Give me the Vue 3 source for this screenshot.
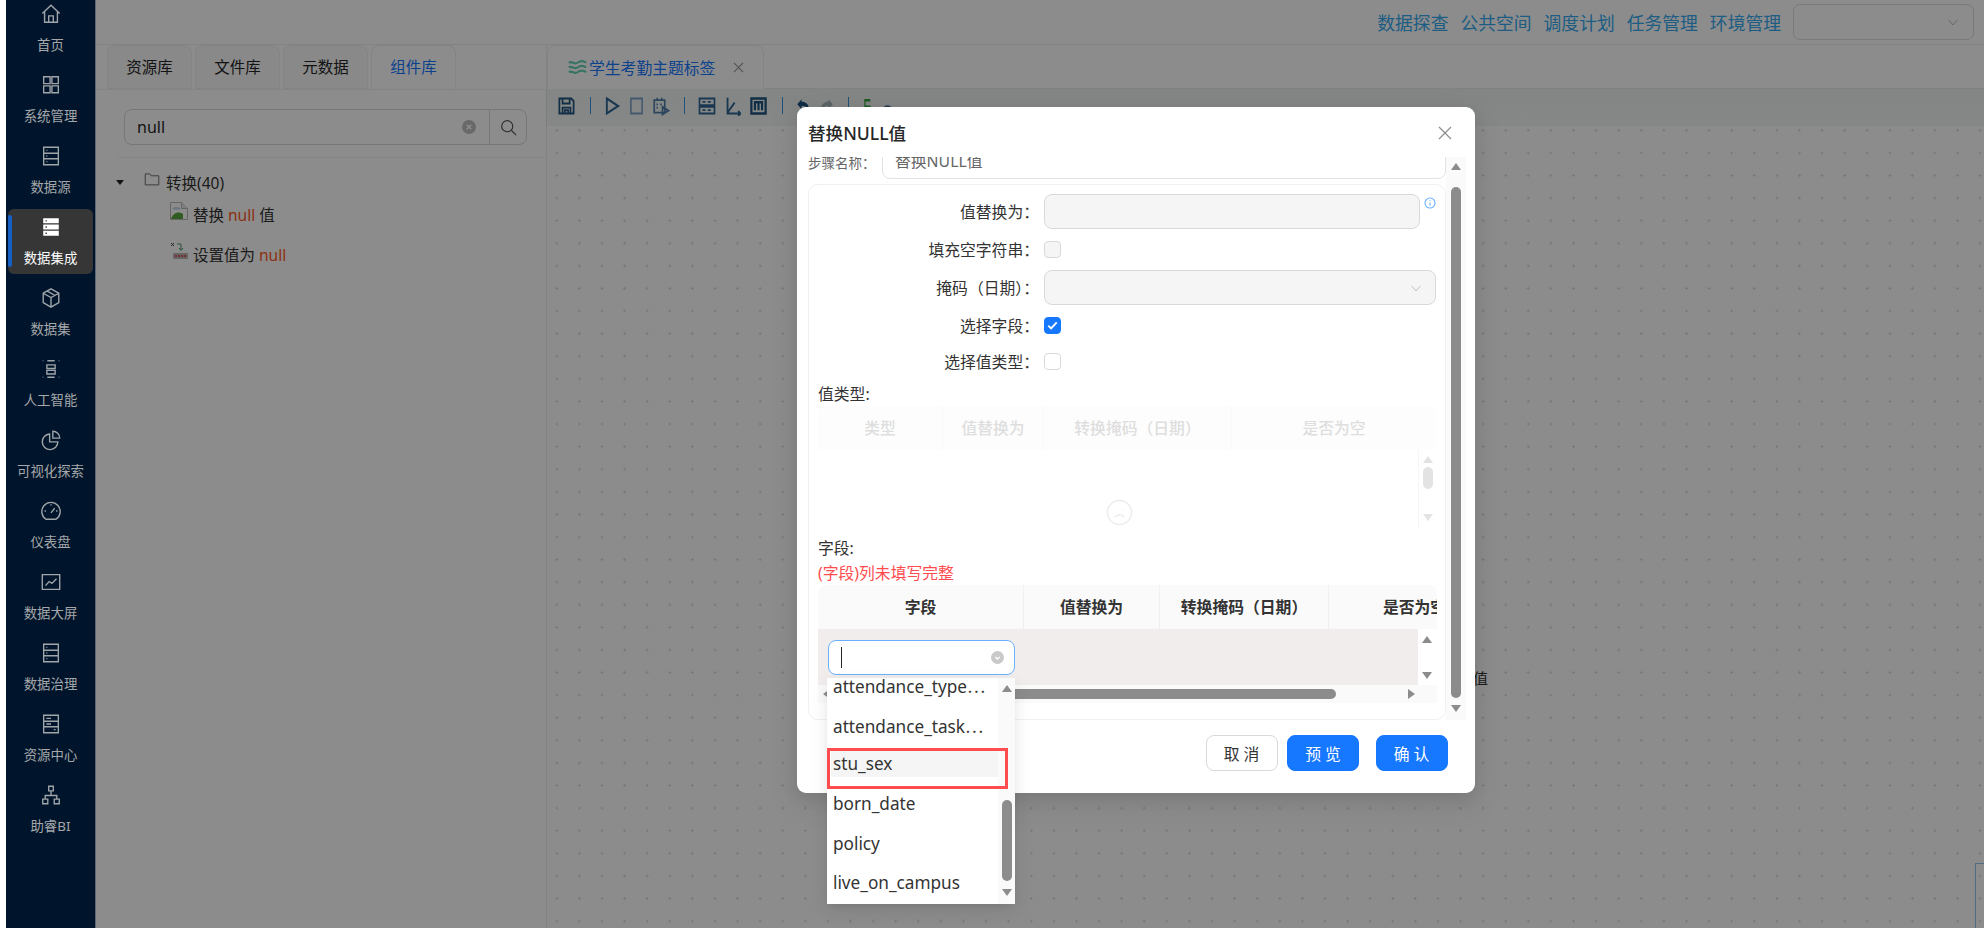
<script setup>
const server = 'M4 2.5h16v19H4z M4 9h16 M4 15h16 M7 5.8h1 M7 12h1 M7 18.2h1'

const menu = [
  { label: '首页', d: 'M2.5 11.5L12 2.5l9.5 9 M5 9.5V21h14V9.5 M9.5 21v-7h5v7' },
  { label: '系统管理', d: 'M4 3h7v7.5H4z M13 3h7v7.5h-7z M4 13h7v7.5H4z M13 13h7v7.5h-7z' },
  { label: '数据源', d: server },
  {
    label: '数据集成',
    active: true,
    d: 'M3.5 2.5h17V8h-17z M6 4.5v1.5h1.5V4.5z M3.5 9.3h17v5.4h-17z M6 11.2v1.5h1.5v-1.5z M3.5 16h17v5.5h-17z M6 18v1.5h1.5V18z',
  },
  { label: '数据集', d: 'M12 2L20.5 6.8V17L12 22L3.5 17V6.8z M3.5 6.8L12 11.5L20.5 6.8 M12 11.5V22 M8 4.5L16 9' },
  { label: '人工智能', d: 'M3 3h.6 M20.4 3h.6 M3 21h.6 M20.4 21h.6 M8 3h8 M8 21h8 M7.5 7.5h9v4h-9z M7.5 13.5h9v4h-9z' },
  { label: '可视化探索', d: 'M10.5 5.5A8.5 8.5 0 1 0 19.5 14H10.5z M14 2.5A7.5 7.5 0 0 1 21.5 10H14z' },
  { label: '仪表盘', d: 'M6.5 21A10 10 0 1 1 17.5 21z M12 14L16 9 M12 4.5v1.5 M5 12h1.5 M17.5 12H19' },
  { label: '数据大屏', d: 'M2.5 4h19v16h-19z M6 16l4-4.5 3 2 5-5' },
  { label: '数据治理', d: server },
  { label: '资源中心', d: 'M4 2.5h16v19H4z M4 9h16 M4 15h16 M7 5.8h5 M7 12h5 M15 18.2h2' },
  { label: '助睿BI', d: 'M9.5 2.5h5v5h-5z M3 16.5h5.5v5H3z M15.5 16.5H21v5h-5.5z M12 7.5v5 M5.7 16.5v-4h12.6v4' },
]

const links = ['数据探查', '公共空间', '调度计划', '任务管理', '环境管理']
const libTabs = ['资源库', '文件库', '元数据', '组件库']

const tools = [
  { w: 19, c: '#1f5480', d: 'M3 3h15l3 3v15H3z M7 3v6h9V3 M7 21v-7h10v7 M10 17h4v4h-4z' },
  { sep: true },
  { w: 17, c: '#2f6593', sw: 2.6, d: 'M4 3l16 9-16 9z' },
  { w: 15, c: '#7ba3c6', sw: 2.6, d: 'M3 3h18v18H3z' },
  { w: 18, c: '#4d7fa8', d: 'M3 5h14v15H3z M7 2v4 M13 2v4 M14 13l8 4.5-8 4.5z M6 10h2 M11 10h2 M6 14h2' },
  { sep: true },
  { w: 18, c: '#2f6593', d: 'M2 3h20v8H2z M2 13h20v8H2z M6 7h4 M13 7h4 M6 17h4 M13 17h4' },
  { w: 17, c: '#2f6593', sw: 2.6, d: 'M5 2v19h18 M5 20L15 8 M20 18l3 3-3 3' },
  { w: 19, c: '#1f5480', sw: 2.8, d: 'M3 3h18v18H3z M7.5 17V7.5h9V17 M12 7.5V17' },
  { sep: true },
  { w: 15, c: '#1f5480', fill: true, d: 'M9 4L2 10l7 6v-4c6 0 9 1 12 6 0-8-5-11-12-11z' },
  { w: 15, c: '#a8b4bd', fill: true, d: 'M15 4l7 6-7 6v-4c-6 0-9 1-12 6 0-8 5-11 12-11z' },
  { sep: true },
  { w: 10, c: '#39a63c', sw: 3, d: 'M20 5H7v8h12v9H4' },
  { w: 15, c: '#4a6d8c', sw: 2, d: 'M3 21a9 9 0 0 1 18 0z' },
]

const options = [
  { label: 'attendance_type⋯' },
  { label: 'attendance_task⋯' },
  { label: 'stu_sex', picked: true },
  { label: 'born_date' },
  { label: 'policy' },
  { label: 'live_on_campus' },
]
</script>

<template>
  <div class="page">
    <aside class="sidebar">
      <div v-for="item in menu" :key="item.label" class="menu-item" :class="{ active: item.active }">
        <svg class="menu-icon" viewBox="0 0 24 24"><path :d="item.d" /></svg>
        <span>{{ item.label }}</span>
      </div>
    </aside>

    <div class="main">
      <header class="topbar">
        <a v-for="link in links" :key="link" class="top-link">{{ link }}</a>
        <div class="top-select">
          <svg class="chevron" viewBox="0 0 16 16"><path d="M2 5l6 7 6-7" /></svg>
        </div>
      </header>

      <div class="workspace">
        <section class="lib">
          <div class="lib-tabs">
            <div v-for="tab in libTabs" :key="tab" class="lib-tab" :class="{ on: tab === '组件库' }">{{ tab }}</div>
          </div>
          <div class="search">
            <span class="search-text">null</span>
            <span class="clear"><svg viewBox="0 0 12 12"><path d="M4 4l4 4M8 4l-4 4" /></svg></span>
            <span class="search-btn">
              <svg viewBox="0 0 20 20"><circle cx="8.5" cy="8.5" r="6.5" /><path d="M13.5 13.5L19 19" /></svg>
            </span>
          </div>
          <div class="lib-line"></div>
          <div class="tree-root">
            <i class="caret"></i>
            <svg class="folder" viewBox="0 0 16 14"><path d="M.7 12.8V1h5l1.4 2h8.2v9.8z" /></svg>
            <span>转换(40)</span>
          </div>
          <div class="tree-leaf first">
            <svg class="leaf-icon" viewBox="0 0 18 18">
              <path d="M.5.5h11l6 6v11H.5z" fill="#fff" stroke="#b8b8b8" />
              <path d="M11.5.5v6h6" fill="#e8e8e8" stroke="#b8b8b8" />
              <path d="M1 17c2-6 7-8 12-5v5z" fill="#5aa83c" />
              <path d="M2 7c3-3 6-3 9 0-3 1-6 1-9 0z" fill="#c3d7ee" />
            </svg>
            <span>替换 <em>null</em> 值</span>
          </div>
          <div class="tree-leaf second">
            <svg class="leaf-icon" viewBox="0 0 18 18">
              <path d="M1 1l3 3M4 1L1 4" fill="none" stroke="#444" stroke-width="1" />
              <path d="M7 2h4v6M9 6l2 2.5L13 6" fill="none" stroke="#4c9a6a" stroke-width="1" />
              <rect x="3" y="11" width="15" height="6" rx="1" fill="#b9b9b9" />
              <path d="M5 14h11" stroke="#d9534f" stroke-width="2" stroke-dasharray="2 1" />
            </svg>
            <span>设置值为 <em>null</em></span>
          </div>
        </section>

        <section class="editor">
          <div class="editor-tabs">
            <div class="editor-tab">
              <svg class="wave" viewBox="0 0 24 20">
                <path d="M1 4c4-3 7 3 11 0s7-3 11 0 M1 10c4-3 7 3 11 0s7-3 11 0 M1 16c4-3 7 3 11 0s7-3 11 0" />
              </svg>
              <span>学生考勤主题标签</span>
              <svg class="tab-close" viewBox="0 0 12 12"><path d="M1 1l10 10M11 1L1 11" /></svg>
            </div>
          </div>
          <div class="toolbar">
            <template v-for="(tool, i) in tools" :key="i">
              <span v-if="tool.sep" class="tool-sep"></span>
              <svg v-else class="tool" :width="tool.w" height="20" viewBox="0 0 24 24" preserveAspectRatio="none">
                <path
                  :d="tool.d"
                  :fill="tool.fill ? tool.c : 'none'"
                  :stroke="tool.fill ? 'none' : tool.c"
                  :stroke-width="tool.sw || 2.2"
                />
              </svg>
            </template>
          </div>
          <div class="canvas">
            <span class="node-label">替换NULL值</span>
            <div class="node-box"></div>
          </div>
        </section>
      </div>

      <div class="mask"></div>

      <div class="dialog">
        <div class="dialog-head">
          <span>替换NULL值</span>
          <svg class="dialog-close" viewBox="0 0 14 14"><path d="M1 1l12 12M13 1L1 13" /></svg>
        </div>

        <div class="dialog-body">
          <div class="form">
            <div class="step-row">
              <span class="step-label">步骤名称：</span>
              <div class="step-input">替换NULL值</div>
            </div>

            <div class="card">
              <div class="row">
                <label>值替换为：</label>
                <div class="input disabled short"></div>
                <svg class="info" viewBox="0 0 12 12">
                  <circle cx="6" cy="6" r="5" />
                  <path d="M6 3.2v.8M6 5.4v3.4" />
                </svg>
              </div>
              <div class="row">
                <label>填充空字符串：</label>
                <span class="check disabled"></span>
              </div>
              <div class="row third">
                <label>掩码（日期）：</label>
                <div class="input disabled">
                  <svg class="chevron" viewBox="0 0 16 16"><path d="M2 5l6 7 6-7" /></svg>
                </div>
              </div>
              <div class="row">
                <label>选择字段：</label>
                <span class="check on">
                  <svg viewBox="0 0 16 16"><path d="M3.5 8.2l3 3 6-6.5" /></svg>
                </span>
              </div>
              <div class="row fifth">
                <label>选择值类型：</label>
                <span class="check"></span>
              </div>

              <div class="sub-title">值类型:</div>
              <div class="table-a">
                <div class="head head-a">
                  <div>类型</div>
                  <div>值替换为</div>
                  <div>转换掩码（日期）</div>
                  <div>是否为空</div>
                </div>
                <div class="body-a">
                  <svg class="sad" viewBox="0 0 28 28">
                    <circle cx="14" cy="14" r="12.5" />
                    <path d="M9 19c3-3.5 7-3.5 10 0 M10 11h.5 M17.5 11h.5" />
                  </svg>
                  <div class="bar bar-a">
                    <i class="up"></i>
                    <b class="thumb-a"></b>
                    <i class="down"></i>
                  </div>
                </div>
              </div>

              <div class="sub-title fields">字段:</div>
              <div class="error">(字段)列未填写完整</div>
              <div class="table-b">
                <div class="head head-b">
                  <div>字段</div>
                  <div>值替换为</div>
                  <div>转换掩码（日期）</div>
                  <div>是否为空</div>
                </div>
                <div class="body-b">
                  <div class="cell-row">
                    <div class="combo">
                      <span class="cursor"></span>
                      <span class="clear small"><svg viewBox="0 0 12 12"><path d="M4 5l2 2 2-2" /></svg></span>
                    </div>
                  </div>
                  <div class="bar bar-b">
                    <i class="up"></i>
                    <i class="down"></i>
                  </div>
                </div>
                <div class="hbar">
                  <i class="left"></i>
                  <b class="hthumb"></b>
                  <i class="right"></i>
                </div>
              </div>
            </div>
          </div>

          <div class="bar bar-main">
            <i class="up"></i>
            <b class="thumb-main"></b>
            <i class="down"></i>
          </div>
        </div>

        <div class="dialog-foot">
          <button class="btn">取 消</button>
          <button class="btn primary">预 览</button>
          <button class="btn primary last">确 认</button>
        </div>

        <div class="dropdown">
          <div class="option-list">
            <div v-for="opt in options" :key="opt.label" class="option" :class="{ picked: opt.picked }">
              <span>{{ opt.label }}</span>
            </div>
          </div>
          <div class="bar bar-drop">
            <i class="up"></i>
            <b class="thumb-drop"></b>
            <i class="down"></i>
          </div>
          <div class="mark"></div>
        </div>
      </div>
    </div>
  </div>
</template>

<style>
html,
body {
  margin: 0;
  background: #fff;
  overflow: hidden;
}
</style>

<style scoped>
.page {
  display: flex;
  width: 1984px;
  height: 928px;
  padding-left: 6px;
  box-sizing: border-box;
  overflow: hidden;
  font-family: "Noto Sans", "Noto Sans CJK SC", sans-serif;
  color: #262626;
}

/* sidebar */
.sidebar {
  width: 90px;
  flex: none;
  background: #00152b;
  border-right: 1px solid #5a6675;
  box-sizing: border-box;
  padding: 0 2px;
  display: flex;
  flex-direction: column;
  gap: 6px;
  margin-top: 0;
  position: relative;
  z-index: 3;
}
.menu-item {
  height: 65px;
  flex: none;
  border-radius: 6px;
  display: flex;
  flex-direction: column;
  align-items: center;
  color: #a5a7aa;
  font-size: 13.4px;
  line-height: 20px;
  position: relative;
}
.menu-item:first-child {
  margin-top: -4px;
}
.menu-item.active {
  background: #363636;
  color: #fff;
}
.menu-item.active::before {
  content: "";
  position: absolute;
  left: 0;
  top: 6px;
  bottom: 7px;
  width: 4px;
  background: #1660c4;
  border-radius: 2px;
}
.menu-icon {
  width: 22px;
  height: 22px;
  margin-top: 7px;
  margin-bottom: 10px;
  fill: none;
  stroke: #a0a5aa;
  stroke-width: 1.5;
}
.active .menu-icon {
  fill: #fff;
  stroke: none;
  fill-rule: evenodd;
}

/* main area */
.main {
  flex: 1;
  min-width: 0;
  position: relative;
  display: flex;
  flex-direction: column;
}
.topbar {
  height: 44px;
  flex: none;
  border-bottom: 1px solid #eee;
  display: flex;
  align-items: center;
  justify-content: flex-end;
  gap: 12px;
  padding-right: 10px;
  font-size: 17.8px;
}
.top-link {
  color: #36aaf0;
}
.top-select {
  width: 181px;
  height: 36px;
  box-sizing: border-box;
  border: 1.5px solid #dcdcdc;
  border-radius: 7px;
  display: flex;
  align-items: center;
  justify-content: flex-end;
  padding-right: 14px;
}
.chevron {
  width: 12px;
  height: 12px;
  fill: none;
  stroke: #bdbdbd;
  stroke-width: 1.3;
}

.workspace {
  flex: 1;
  min-height: 0;
  display: flex;
}
.lib {
  width: 451px;
  flex: none;
  border-right: 1px solid #eee;
  box-sizing: border-box;
  font-size: 15.5px;
}
.lib-tabs {
  display: flex;
  gap: 3px;
  height: 44px;
  padding-left: 11px;
  border-bottom: 1px solid #f0f0f0;
}
.lib-tab {
  width: 85px;
  height: 44px;
  box-sizing: border-box;
  border: 1px solid #f0f0f0;
  border-radius: 8px 8px 0 0;
  background: #fafafa;
  text-align: center;
  line-height: 42px;
}
.lib-tab.on {
  background: #fff;
  border-bottom-color: #fff;
  color: #1677ff;
}
.search {
  margin: 19px 0 0 28px;
  width: 403px;
  height: 36px;
  box-sizing: border-box;
  border: 1px solid #d9d9d9;
  border-radius: 8px;
  display: flex;
  align-items: center;
  position: relative;
  padding-left: 12px;
}
.search-text {
  flex: 1;
  font-size: 16px;
}
.clear {
  width: 14px;
  height: 14px;
  border-radius: 50%;
  background: #bfbfbf;
  display: flex;
  margin-right: 13px;
}
.clear svg {
  width: 14px;
  height: 14px;
  fill: none;
  stroke: #fff;
  stroke-width: 1.2;
}
.search-btn {
  width: 36px;
  height: 100%;
  border-left: 1px solid #d9d9d9;
  display: flex;
  align-items: center;
  justify-content: center;
}
.search-btn svg {
  width: 17px;
  height: 17px;
  fill: none;
  stroke: #555;
  stroke-width: 1.4;
}
.lib-line {
  height: 1px;
  margin: 12px 0 0 22px;
  background: #f0f0f0;
}
.tree-root {
  height: 24px;
  margin-top: 12px;
  padding-left: 20px;
  display: flex;
  align-items: center;
  color: #333;
}
.caret {
  width: 0;
  height: 0;
  border-left: 4px solid transparent;
  border-right: 4px solid transparent;
  border-top: 5px solid #222;
  margin-right: 20px;
}
.folder {
  width: 16px;
  height: 13px;
  margin: -6px 6px 0 0;
  fill: none;
  stroke: #666;
  stroke-width: 1;
}
.tree-leaf {
  height: 24px;
  padding-left: 74px;
  display: flex;
  align-items: center;
  gap: 5px;
  color: #333;
}
.tree-leaf.first {
  margin-top: 8px;
}
.tree-leaf.second {
  margin-top: 16px;
}
.tree-leaf em {
  font-style: normal;
  color: #ff5a1f;
}
.leaf-icon {
  width: 18px;
  height: 18px;
  flex: none;
  margin-top: -6px;
}

.editor {
  flex: 1;
  min-width: 0;
  display: flex;
  flex-direction: column;
}
.editor-tabs {
  height: 43px;
  flex: none;
  border-bottom: 1px solid #eee;
}
.editor-tab {
  width: 217px;
  height: 44px;
  box-sizing: border-box;
  border: 1px solid #f0f0f0;
  border-bottom: 0;
  border-radius: 8px 8px 0 0;
  background: #fff;
  display: flex;
  align-items: center;
  padding-left: 20px;
  color: #1677ff;
  font-size: 15.8px;
}
.wave {
  width: 19px;
  height: 17px;
  margin-right: 2px;
  fill: none;
  stroke: #63d2b4;
  stroke-width: 2.6;
}
.tab-close {
  width: 11px;
  height: 11px;
  margin-left: 18px;
  fill: none;
  stroke: #999;
  stroke-width: 1.3;
}
.toolbar {
  height: 37px;
  flex: none;
  background: linear-gradient(#eef5f2, #f3f7f5);
  box-shadow: 0 1px 2px rgba(0, 0, 0, 0.12);
  display: flex;
  align-items: center;
  gap: 8px;
  padding: 0 0 4px 10px;
  box-sizing: border-box;
}
.tool {
  flex: none;
}
.tool-sep {
  width: 1px;
  height: 17px;
  background: #3b94e0;
  margin: 0 5.5px;
}
.canvas {
  flex: 1;
  min-height: 0;
  position: relative;
  overflow: hidden;
  background-color: #fff;
  background-image: radial-gradient(circle, #dcdcdc 1px, transparent 1.2px);
  background-size: 22.6px 22.6px;
  background-position: -1.5px -7px;
}
.node-label {
  position: absolute;
  right: 496px;
  top: 541px;
  font-size: 15px;
  line-height: 22px;
  color: #333;
}
.node-box {
  position: absolute;
  left: 1428px;
  top: 737px;
  width: 120px;
  height: 120px;
  border: 1px solid #94c4f5;
}

.mask {
  position: absolute;
  inset: 0;
  background: rgba(0, 0, 0, 0.45);
  z-index: 1;
}

/* dialog */
.dialog {
  position: absolute;
  left: 701px;
  top: 107px;
  width: 677.5px;
  height: 686px;
  background: #fff;
  border-radius: 9px;
  box-shadow: 0 6px 16px rgba(0, 0, 0, 0.08), 0 9px 28px 8px rgba(0, 0, 0, 0.05);
  z-index: 2;
  display: flex;
  flex-direction: column;
  font-size: 15.8px;
}
.dialog-head {
  height: 50px;
  flex: none;
  display: flex;
  align-items: center;
  justify-content: space-between;
  padding: 0 23px 0 11px;
  box-sizing: border-box;
  font-size: 17.6px;
  font-weight: 500;
  margin-bottom: 0;
}
.dialog-close {
  width: 14px;
  height: 14px;
  fill: none;
  stroke: #8c8c8c;
  stroke-width: 1.2;
  margin-top: 2px;
}
.dialog-body {
  height: 563px;
  flex: none;
  display: flex;
  padding-left: 11px;
}
.form {
  width: 638px;
  flex: none;
  overflow: hidden;
}
.step-row {
  display: flex;
  align-items: center;
  margin-top: -13px;
  height: 35px;
}
.step-label {
  width: 74px;
  flex: none;
  font-size: 13.5px;
  color: #666;
}
.step-input {
  flex: 1;
  height: 35px;
  box-sizing: border-box;
  border: 1px solid #e3e3e3;
  border-radius: 8px;
  line-height: 33px;
  padding-left: 12px;
  color: #666;
}
.card {
  margin-top: 5px;
  height: 536px;
  box-sizing: border-box;
  border: 1px solid #f0f0f0;
  border-radius: 10px;
  padding: 9px 9px 0;
  overflow: hidden;
}
.row {
  height: 35px;
  display: flex;
  align-items: center;
  margin-bottom: 3px;
}
.row.third {
  margin-top: 2px;
}
.row.fifth {
  margin-top: -2px;
}
.row label {
  width: 221px;
  flex: none;
  text-align: right;
  margin-right: 5px;
  white-space: nowrap;
  color: #333;
}
.input {
  flex: 1;
  height: 35px;
  box-sizing: border-box;
  border: 1px solid #d9d9d9;
  border-radius: 8px;
  display: flex;
  align-items: center;
  justify-content: flex-end;
  padding-right: 13px;
}
.input.disabled {
  background: #f5f5f5;
}
.input.short {
  flex: none;
  width: 376px;
}
.info {
  width: 12px;
  height: 12px;
  margin: -18px 0 0 4px;
  fill: none;
  stroke: #69b1ff;
  stroke-width: 1.1;
}
.check {
  width: 17px;
  height: 17px;
  box-sizing: border-box;
  border: 1px solid #d9d9d9;
  border-radius: 4px;
  background: #fff;
}
.check.disabled {
  background: #f5f5f5;
}
.check.on {
  background: #1677ff;
  border-color: #1677ff;
}
.check.on svg {
  display: block;
  width: 15px;
  height: 15px;
  fill: none;
  stroke: #fff;
  stroke-width: 2;
}
.sub-title {
  height: 24px;
  line-height: 24px;
  margin-top: 2px;
  color: #333;
}
.sub-title.fields {
  margin-top: 7px;
}
.error {
  height: 24px;
  line-height: 24px;
  color: #ff4d4f;
  margin-top: 1px;
}

.head {
  display: grid;
  height: 44px;
  border-radius: 8px 8px 0 0;
  overflow: hidden;
}
.head > div {
  text-align: center;
  line-height: 44px;
  border-right: 1px solid #f0f0f0;
  white-space: nowrap;
}
.head-a {
  grid-template-columns: 125px 101px 188px 205px;
  background: #fdfdfd;
  color: #dedede;
  font-weight: 500;
}
.head-a > div {
  border-right-color: #f8f8f8;
}
.head-b {
  grid-template-columns: 206px 136px 169px 172px;
  width: 619px;
  background: #fafafa;
  font-weight: 600;
  color: #333;
}
.body-a {
  height: 79px;
  display: flex;
  justify-content: flex-end;
  position: relative;
  overflow: hidden;
}
.sad {
  position: absolute;
  left: 288px;
  top: 49px;
  width: 27px;
  height: 27px;
  fill: none;
  stroke: #ececec;
  stroke-width: 1.5;
}
.body-b {
  height: 56px;
  display: flex;
}
.cell-row {
  flex: 1;
  background: #f2eded;
  padding: 11px 0 0 9.5px;
}
.combo {
  width: 187.5px;
  height: 35px;
  box-sizing: border-box;
  border: 1.5px solid #69b1ff;
  border-radius: 8px;
  background: #fff;
  display: flex;
  align-items: center;
  justify-content: space-between;
  padding: 0 10px 0 12px;
}
.cursor {
  width: 1px;
  height: 21px;
  background: #262626;
}
.clear.small {
  margin: 0;
  width: 13px;
  height: 13px;
  background: #c9c9c9;
}

/* fake scrollbars */
.bar {
  display: flex;
  flex-direction: column;
  align-items: center;
  flex: none;
  box-sizing: border-box;
}
.up,
.down {
  width: 0;
  height: 0;
  border-left: 5.5px solid transparent;
  border-right: 5.5px solid transparent;
  flex: none;
}
.up {
  border-bottom: 7px solid #8c8c8c;
}
.down {
  border-top: 7px solid #8c8c8c;
}
.bar b {
  display: block;
  width: 10px;
  border-radius: 5px;
  background: #8c8c8c;
  flex: none;
}
.bar-main {
  width: 20px;
  background: #fafafa;
  padding-top: 6px;
}
.thumb-main {
  height: 511px;
  margin: 17px 0 7px;
}
.bar-a {
  width: 18px;
  padding-top: 6px;
  border-left: 1px solid #f5f5f5;
}
.bar-a .up {
  border-bottom-color: #e3e3e3;
}
.bar-a .down {
  border-top-color: #e3e3e3;
}
.thumb-a {
  height: 22px;
  margin: 4px 0 25px;
  background: #e3e3e3 !important;
}
.bar-b {
  width: 18px;
  background: #fff;
  padding-top: 7px;
  gap: 29px;
}
.hbar {
  height: 18px;
  background: #fafafa;
  display: flex;
  align-items: center;
  padding: 0 22px 0 5px;
  box-sizing: border-box;
  width: 619px;
}
.hbar .left,
.hbar .right {
  width: 0;
  height: 0;
  border-top: 5.5px solid transparent;
  border-bottom: 5.5px solid transparent;
}
.hbar .left {
  border-right: 7px solid #8c8c8c;
}
.hbar .right {
  border-left: 7px solid #8c8c8c;
}
.hthumb {
  display: block;
  height: 10px;
  width: 494px;
  margin: 0 72px 0 12px;
  border-radius: 5px;
  background: #8c8c8c;
}
.dialog-foot {
  flex: 1;
  display: flex;
  justify-content: flex-end;
  gap: 9.5px;
  padding: 15px 27px 0 0;
}
.btn {
  width: 72px;
  height: 36px;
  box-sizing: border-box;
  border: 1px solid #d9d9d9;
  border-radius: 8px;
  background: #fff;
  color: #333;
  font-family: inherit;
  font-size: 15.8px;
  padding: 0;
}
.btn.primary {
  background: #1677ff;
  border-color: #1677ff;
  color: #fff;
}
.btn.last {
  margin-left: 7px;
}

/* select popup */
.dropdown {
  position: absolute;
  left: 30px;
  top: 571px;
  width: 188px;
  height: 226px;
  background: #fff;
  box-shadow: 0 6px 16px rgba(0, 0, 0, 0.1), 0 3px 6px -4px rgba(0, 0, 0, 0.12);
  overflow: visible;
  display: flex;
  font-size: 17.2px;
}
.option-list {
  width: 171px;
  flex: none;
  height: 226px;
  overflow: hidden;
}
.option {
  height: 39.4px;
  display: flex;
  align-items: center;
  padding-left: 6px;
  white-space: nowrap;
  color: #333;
}
.option:first-child {
  margin-top: -12px;
}
.option.picked span {
  display: block;
  width: 100%;
  background: #f5f5f5;
  line-height: 26px;
  margin-left: -2px;
  padding-left: 2px;
}
.bar-drop {
  width: 17px;
  padding-top: 7px;
  background: #fafafa;
  height: 226px;
}
.thumb-drop {
  height: 81px;
  margin: 108px 0 8px;
}
.mark {
  position: absolute;
  left: 0;
  top: 70px;
  width: 181px;
  height: 41px;
  box-sizing: border-box;
  border: 3px solid #ff4d4f;
}
</style>
